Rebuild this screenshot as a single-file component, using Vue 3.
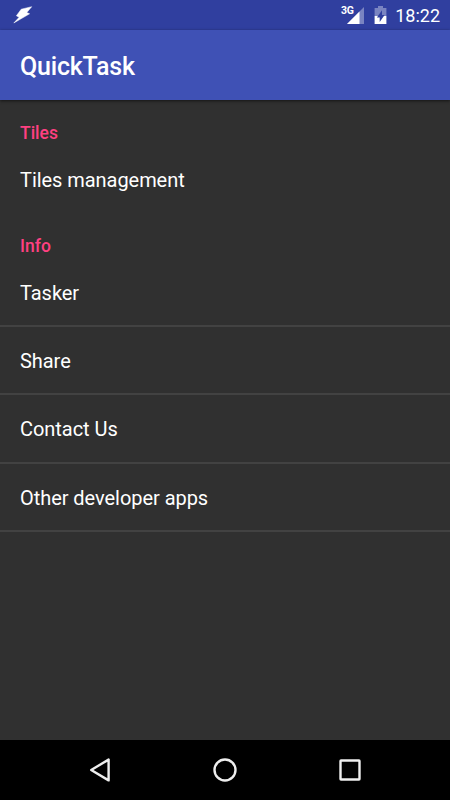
<script setup>
const sections = [
  { title: 'Tiles', items: ['Tiles management'], divided: false },
  { title: 'Info', items: ['Tasker', 'Share', 'Contact Us', 'Other developer apps'], divided: true },
]
</script>

<template>
  <div class="screen">
    <header class="status">
      <svg class="bolt" width="20" height="18" viewBox="0 0 20 18">
        <path d="M8.2 3.2 L18.7 .7 L13.8 6.6 L16.6 7.8 L.8 17 L6.1 11.3 L3.4 9.8 Z" fill="#fff" stroke="#fff" stroke-width=".5" stroke-linejoin="round" />
      </svg>
      <div class="indicators">
        <span class="network">3G</span>
        <svg class="signal" width="18" height="18" viewBox="0 0 18 18">
          <path d="M0 18 L17 1 V18 Z" fill="#fff" fill-opacity=".36" />
          <path d="M0 18 L12.5 5.5 V18 Z" fill="#fff" />
        </svg>
        <svg class="battery" width="13" height="18" viewBox="0 0 13 18">
          <path d="M4 0 H9 V2 H12.4 V10 H.6 V2 H4 Z" fill="#fff" fill-opacity=".36" />
          <path d="M.6 10 H12.4 V18 H.6 Z" fill="#fff" />
          <path d="M8 4.2 L2.9 11.4 H5.7 V16 L10.6 9 H8 Z" fill="#303f9f" />
        </svg>
        <span class="clock">18:22</span>
      </div>
    </header>
    <div class="toolbar"><h1>QuickTask</h1></div>
    <main>
      <section v-for="s in sections" :key="s.title" :class="{ divided: s.divided }">
        <h2>{{ s.title }}</h2>
        <ul>
          <li v-for="item in s.items" :key="item">{{ item }}</li>
        </ul>
      </section>
    </main>
    <nav>
      <svg width="30" height="30" viewBox="0 0 30 30">
        <path d="M6.2 15 L23.6 4.6 V25.4 Z" />
      </svg>
      <svg width="30" height="30" viewBox="0 0 30 30">
        <circle cx="15" cy="15" r="10.5" />
      </svg>
      <svg width="30" height="30" viewBox="0 0 30 30">
        <rect x="5.5" y="5.5" width="19" height="19" rx=".5" />
      </svg>
    </nav>
  </div>
</template>

<style>
body {
  margin: 0;
  background: #303030;
}
</style>

<style scoped>
.screen {
  width: 450px;
  height: 800px;
  display: flex;
  flex-direction: column;
  overflow: hidden;
  background: #303030;
  color: #fff;
  font-family: Roboto, sans-serif;
}
.status {
  height: 30px;
  flex: none;
  box-sizing: border-box;
  padding: 0 10px 0 13px;
  display: flex;
  align-items: center;
  justify-content: space-between;
  background: #303f9f;
}
.indicators {
  display: flex;
  align-items: center;
  height: 30px;
}
.network {
  font-size: 10.5px;
  font-weight: 700;
  line-height: 12px;
  letter-spacing: -0.3px;
  margin: 0 -6.5px 8px 0;
}
.battery {
  margin: 0 8px 0 9px;
}
.clock {
  font-size: 18px;
  line-height: 30px;
  padding-top: 1px;
}
.toolbar {
  height: 70px;
  flex: none;
  padding-left: 20px;
  display: flex;
  align-items: center;
  background: #3f51b5;
  box-shadow: 0 1px 3px rgba(0, 0, 0, 0.6);
}
h1 {
  margin: 0;
  padding-top: 3px;
  font-size: 25px;
  line-height: 30px;
  font-weight: 500;
  letter-spacing: -0.2px;
}
main {
  flex: 1;
}
section {
  padding-top: 20px;
}
h2 {
  margin: 0;
  padding: 1px 0 0 20px;
  height: 24px;
  font-size: 17.5px;
  line-height: 25px;
  font-weight: 500;
  color: #ff4081;
}
ul {
  margin: 0;
  padding: 0;
  list-style: none;
}
li {
  height: 68.4px;
  box-sizing: border-box;
  padding-left: 20px;
  font-size: 20px;
  line-height: 70px;
  letter-spacing: -0.05px;
}
.divided li {
  border-bottom: 2px solid #424242;
}
.divided li + li {
  line-height: 68px;
}
nav {
  height: 60px;
  flex: none;
  display: flex;
  align-items: center;
  justify-content: center;
  gap: 95px;
  background: #000;
}
nav svg {
  fill: none;
  stroke: #eee;
  stroke-width: 2.4;
  stroke-linejoin: round;
}
</style>
